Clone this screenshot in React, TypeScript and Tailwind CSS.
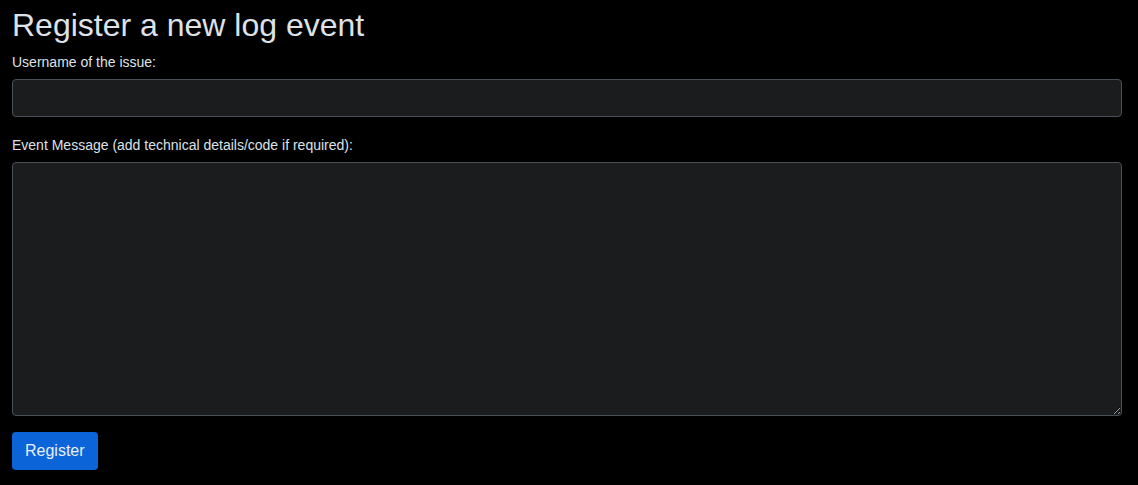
import React, { useState } from "react";

/** ログイベント登録フォーム */
export default function App() {
  const [username, setUsername] = useState("");
  const [message, setMessage] = useState("");

  return (
    <div
      className="min-h-screen bg-black pl-3 pr-4 pt-[6px] text-[#dee2e6]"
      style={{ fontFamily: '"Liberation Sans", Arial, sans-serif' }}
    >
      <h1 className="mb-[8px] text-[32px] font-normal leading-[1.2]">Register a new log event</h1>
      <form onSubmit={(e) => e.preventDefault()}>
        <div className="mb-[18px]">
          <label className="mb-[6px] block text-[14px] leading-[21px]">Username of the issue:</label>
          <input
            value={username}
            onChange={(e) => setUsername(e.target.value)}
            className="block h-[38px] w-full rounded-[4px] border border-[#495057] bg-[#1b1c1e] px-3 text-[16px] text-[#dee2e6] outline-none"
          />
        </div>
        <div className="mb-[16px]">
          <label className="mb-[6px] block text-[14px] leading-[21px]">
            Event Message (add technical details/code if required):
          </label>
          <textarea
            value={message}
            onChange={(e) => setMessage(e.target.value)}
            className="block h-[254px] w-full rounded-[4px] border border-[#495057] bg-[#1b1c1e] px-3 py-[6px] text-[16px] text-[#dee2e6] outline-none"
          />
        </div>
        <button
          type="submit"
          className="h-[38px] rounded-[4px] bg-[#0b65d8] px-[13px] text-[16px] text-[#e8effb]"
        >
          Register
        </button>
      </form>
    </div>
  );
}
